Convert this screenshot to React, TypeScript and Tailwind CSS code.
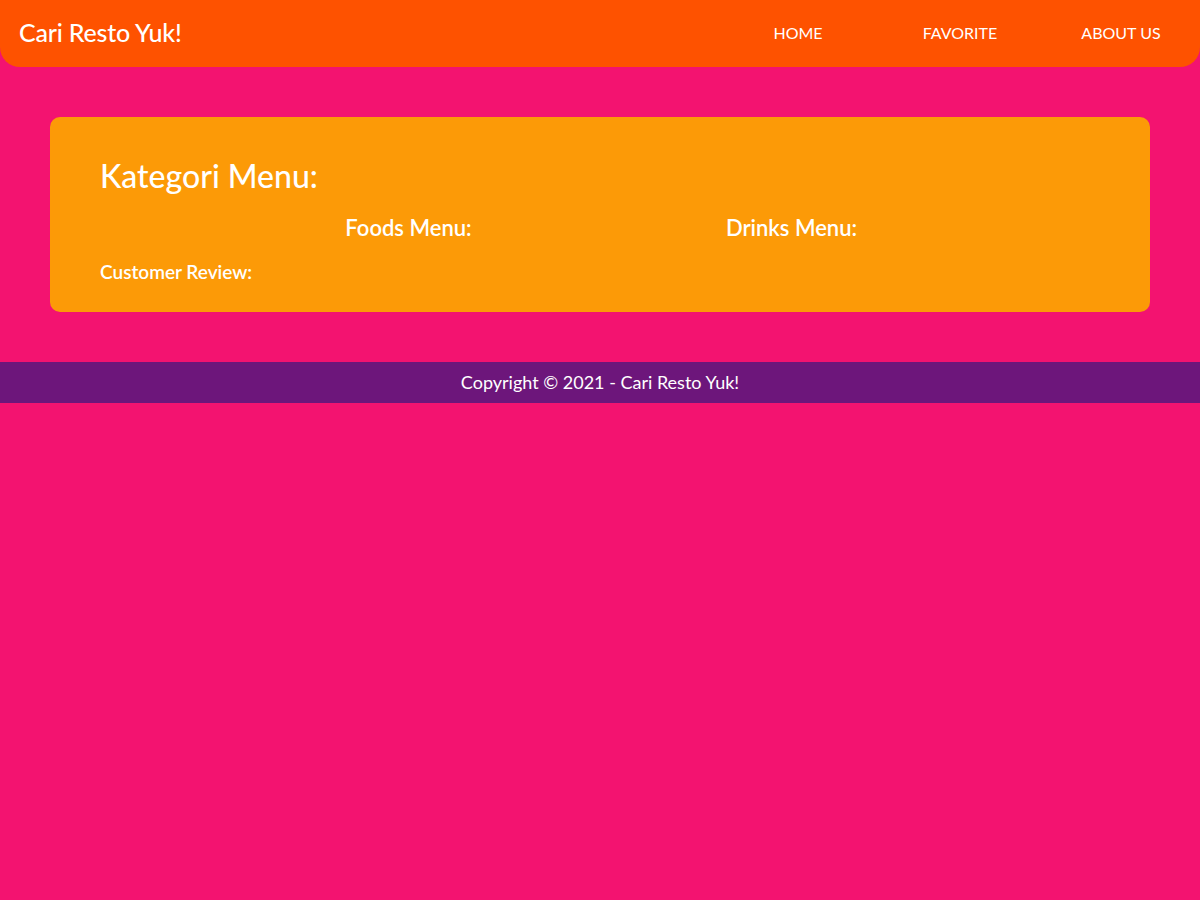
export default function App() {
  return (
    <div className="min-h-[900px] bg-[#f31370] text-white" style={{ fontFamily: "Lato, 'Open Sans', sans-serif" }}>
      <header className="flex h-[67px] items-center justify-between rounded-b-[20px] bg-[#fe5200] pl-[19px] pb-[1px]">
        <a className="text-[25px] font-medium tracking-[-0.2px]">Cari Resto Yuk!</a>
        <nav className="flex h-full items-center">
          <a className="w-[162px] text-center text-[16px] translate-x-[3px]">HOME</a>
          <a className="w-[162px] text-center text-[16px] translate-x-[3px]">FAVORITE</a>
          <a className="w-[162px] text-center text-[16px] translate-x-[2px]">ABOUT US</a>
        </nav>
      </header>

      <main className="p-[50px]">
        <section className="rounded-[10px] bg-[#fc9a07] px-[50px] pt-[38px] pb-[28px]">
          <h1 className="text-[32px] font-medium leading-[42px]">Kategori Menu:</h1>
          <div className="mt-[16px] flex justify-center -mx-[50px]">
            <h2 className="w-[383px] text-center text-[22px] font-semibold leading-[30px]">Foods Menu:</h2>
            <h2 className="w-[383px] text-center text-[22px] font-semibold leading-[30px]">Drinks Menu:</h2>
          </div>
          <h3 className="mt-[17px] text-[19px] font-semibold leading-[24px]">Customer Review:</h3>
        </section>
      </main>

      <footer className="flex h-[41px] items-center justify-center bg-[#6d167b] text-[18px]">
        Copyright © 2021 - Cari Resto Yuk!
      </footer>
    </div>
  );
}
